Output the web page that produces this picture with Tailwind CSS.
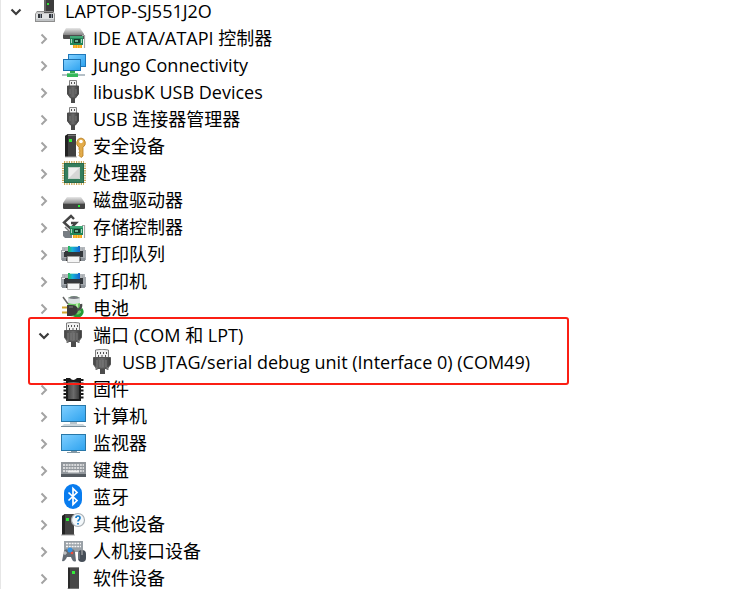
<!DOCTYPE html>
<html lang="zh-CN">
<head>
<meta charset="utf-8">
<meta name="viewport" content="width=device-width, initial-scale=1">
<title>设备管理器</title>
<script src="https://cdn.jsdelivr.net/npm/@tailwindcss/browser@4"></script>
</head>
<body class="h-screen overflow-hidden border-l border-[#e6e6e6] bg-white font-['Open_Sans','Noto_Sans_CJK_SC',sans-serif] text-lg text-black">
<svg class="absolute size-0" aria-hidden="true">
  <defs>
    <linearGradient id="screen" x1="0" y1="0" x2="1" y2="1"><stop offset="0" stop-color="#7dceff"/><stop offset="1" stop-color="#2fa3ef"/></linearGradient>
    <linearGradient id="metal" x1="0" y1="0" x2="0" y2="1"><stop offset="0" stop-color="#e8e8e8"/><stop offset="1" stop-color="#929292"/></linearGradient>
    <linearGradient id="dark" x1="0" y1="0" x2="1" y2="0"><stop offset="0" stop-color="#444"/><stop offset=".5" stop-color="#6c6c6c"/><stop offset="1" stop-color="#3c3c3c"/></linearGradient>
    <linearGradient id="ink" x1="0" y1="0" x2="1" y2="0"><stop offset="0" stop-color="#2bb84b"/><stop offset=".35" stop-color="#19b5d8"/><stop offset="1" stop-color="#1460cf"/></linearGradient>

    <symbol id="closed" viewBox="0 0 12 12"><path d="M3.500 1.500 8 6l-4.500 4.500" fill="none" stroke="#a3a3a3" stroke-width="2"/></symbol>
    <symbol id="open" viewBox="0 0 12 12"><path d="M1.500 3.500 6 8l4.500-4.500" fill="none" stroke="#3c3c3c" stroke-width="2.200"/></symbol>

    <symbol id="board" viewBox="0 0 17 14">
      <path d="M1 1h13v9H1z" fill="#23875a"/><path d="M1 1h13v2H1z" fill="#43a878"/>
      <path d="M5 4h6v4H5z" fill="#163b2c"/><path d="M6 5h3v2H6z" fill="#6fae91"/>
      <path d="M2 4h1v4H2zM12 4h1v4h-1z" fill="#a9d5bf"/>
      <path d="M4 10h9v3H4z" fill="#f4a514"/><path d="M6 10v3M8.500 10v3M11 10v3" stroke="#fad078" stroke-width=".7"/>
      <path d="M15.500 0v13M13 .5h3" stroke="#a6a6a6" stroke-width="1.200"/>
    </symbol>
    <symbol id="root" viewBox="0 0 28 27">
      <path d="M13 0h10v15H13z" fill="#3c3c3c"/><path d="M13 0h2v15h-2z" fill="#666"/><path d="M16 5h2v2h-2z" fill="#35e03c"/>
      <path d="M6 13h16l2 3v8H4v-8z" fill="#8e8e8e"/><path d="M6 14h16l1.500 2h-19z" fill="#c9c9c9"/><path d="M5 16h18v7H5z" fill="#dfe1e2"/><path d="M5 21h18v2H5z" fill="#bfc2c4"/>
      <path d="M7 16h4v4H7zM18 16h4v4h-4z" fill="#30343a"/><path d="M9 16h1v4H9zM20 16h1v4h-1z" fill="#87909b"/>
      <path d="M13 14h9v1h-9z" fill="#555"/>
    </symbol>
    <symbol id="ide" viewBox="0 0 28 27">
      <path d="M7 3h14l4 6H4z" fill="url(#metal)"/><path d="M4 9h21v5H5q-1 0-1-1z" fill="#4e4e4e"/><path d="M4 9h21v1H4z" fill="#8b8b8b"/>
      <use href="#board" x="10" y="10" width="17" height="14"/>
    </symbol>
    <symbol id="network" viewBox="0 0 28 27">
      <path d="M9 2h18v13H9z" fill="#1f78ba"/><path d="M10 3h16v11H10z" fill="url(#screen)"/>
      <path d="M4 7h18v12H4z" fill="#1a6fae"/><path d="M5 8h16v10H5z" fill="url(#screen)"/>
      <path d="M11 19h5v3h-5z" fill="#32a853"/><path d="M3 22h23v2H3z" fill="#b5c0c7"/><path d="M8 21h11v4H8z" fill="#35b85a"/><path d="M8 21h11v1H8z" fill="#78d393"/>
    </symbol>
    <symbol id="usb" viewBox="0 0 28 27">
      <path d="M10.500 1.500h7v6h-7z" fill="#f0f0f0" stroke="#828282"/><path d="M12 3h1v2h-1zM15 3h1v2h-1z" fill="#555"/>
      <path d="M8.500 7h11v8l-3 4h-5l-3-4z" fill="url(#dark)" stroke="#4a4a4a"/><path d="M12 19h4v5h-4z" fill="#4a4a4a"/><path d="M11 10v5M17 10v5" stroke="#777"/>
    </symbol>
    <symbol id="security" viewBox="0 0 28 27">
      <path d="M6 3 9 1h8v23H6z" fill="#404040"/><path d="M6 3 9 1v23H6z" fill="#222"/><path d="M9 2h8v1H9z" fill="#777"/><path d="M10 6h3v3h-3z" fill="#32ec36"/>
      <path d="M6 24h12" stroke="#aaa"/>
      <path d="M22 5a5 5 0 0 1 2 9.200V23l-2 1.500-2-2 1-1.500-1-1.500 1-1.500-1-1.500v-2.300A5 5 0 0 1 22 5z" fill="#e3ac4b" stroke="#b67c20" stroke-width=".8"/><circle cx="22" cy="8.500" r="1.800" fill="#fff"/>
    </symbol>
    <symbol id="cpu" viewBox="0 0 28 27">
      <path d="M5 2.500h20M5 23.500h20M4.500 3v20M25.500 3v20" stroke="#c6a453" stroke-width="3" stroke-dasharray="1.200 1.200"/>
      <path d="M5 3h20v20H5z" fill="#25694b"/><path d="M6 4h18v18H6z" fill="#347d5c"/><path d="M9 7h12v12H9z" fill="#eee"/><path d="M10 18 20 8v10z" fill="#d6d6d6"/><path d="M9.500 7.500h11v11h-11z" fill="none" stroke="#c5d1ca"/>
    </symbol>
    <symbol id="disk" viewBox="0 0 28 27">
      <path d="M8 10h14l4 6H4z" fill="url(#metal)"/><path d="M4 16h22v5q0 1-1 1H5q-1 0-1-1z" fill="#444"/><path d="M4 16h22v1H4z" fill="#777"/><path d="M19 18h2v2h-2z" fill="#2df13a"/>
    </symbol>
    <symbol id="storage" viewBox="0 0 28 27">
      <path d="M4 17h9v7H6l-2-2z" fill="#777d83"/>
      <path d="M15 5 12 2 5 8.500l6.500 6L17 9h-5" fill="none" stroke="#454545" stroke-width="2.400"/><path d="M6 13l5 5 3-3" fill="none" stroke="#777" stroke-width="1.500"/>
      <use href="#board" x="10" y="11" width="17" height="14"/>
    </symbol>
    <symbol id="printer" viewBox="0 0 28 27">
      <path d="M3 6h7v6H3zM19 6h7v6h-7z" fill="#b4b8bc"/><path d="M9 5h12v7H9z" fill="url(#ink)"/><path d="M11 5h8v1h-8z" fill="#b8e5df"/>
      <path d="M2 9h3V7h1v4h17V7h1v2h3v10H2z" fill="#a5aaaf"/><path d="M5 10h19v6H5z" fill="#33373b"/><path d="M9 6h12v5H9z" fill="url(#ink)"/><path d="M3 17h23v3H3z" fill="#8b9197"/>
      <path d="M8 14h13l1 6H7z" fill="#363636"/><path d="M8.500 15.500h12v6h-12z" fill="#f5f5f5" stroke="#999" stroke-width=".7"/><path d="M3 10h3v1H3z" fill="#eee"/>
    </symbol>
    <symbol id="battery" viewBox="0 0 28 27">
      <path d="M9 3q6-4 12 0v17q-6 3-12 0z" fill="#6bca62"/><path d="M9 3v5q6 2 12 0V3q-6-3-12 0z" fill="#dce2e2"/><path d="M9 3q6-4 12 0-6 2-12 0z" fill="#777b80"/><path d="M18 8v5" stroke="#bbf0ac" stroke-width="2"/>
      <path d="M15 20c6 3 10-2 7-6" fill="none" stroke="#239b35" stroke-width="3"/>
      <path d="M3 12.500h7M3 17.500h7" stroke="#d2a52f" stroke-width="2"/>
      <path d="M8 10h4q7 0 7 5t-7 6H8z" fill="#3b3b3b"/><path d="M18 15q5-1 4-6" fill="none" stroke="#4a4a4a" stroke-width="2.500"/><path d="M4 2l5 7" stroke="#666" stroke-width="1.500"/><path d="M10 12h4" stroke="#808080"/>
    </symbol>
    <symbol id="port" viewBox="0 0 28 27">
      <path d="M7.500 1q6.500-1.500 13 0v8h-13z" fill="#f1f1f1" stroke="#7d7d7d"/><path d="M9 3h1v2H9zM12 3h1v2h-1zM15 3h1v2h-1zM18 3h1v2h-1zM10 6h1v2h-1zM13.500 6h1v2h-1zM17 6h1v2h-1z" fill="#555"/>
      <path d="M5.500 8.500h17v7l-3 4h-11l-3-4z" fill="url(#dark)" stroke="#555"/><path d="M9 11v7M12 11v7M15 11v7M18 11v7" stroke="#7c7c7c"/><path d="M12 20h5v5h-5z" fill="#4c4c4c"/>
      <path d="M8.500 18v3M19.500 18v3" stroke="#777" stroke-width="2"/>
    </symbol>
    <symbol id="firmware" viewBox="0 0 28 27">
      <path d="M6.500 3v21M22.500 3v21" stroke="#171717" stroke-width="4" stroke-dasharray="2 1.500"/><path d="M7 2h4q3 4 7 0h4v23H7z" fill="#1b1b1b"/><path d="M9 6h11v17H9z" fill="url(#dark)"/>
    </symbol>
    <symbol id="computer" viewBox="0 0 28 27">
      <path d="M2 2h25v17H2z" fill="#2877a8"/><path d="M3 3h23v15H3z" fill="url(#screen)"/><path d="M11 19h7v2h-7z" fill="#b8c4cb"/><path d="M5 21h19l3 3H2z" fill="#cbd6dc"/><path d="M2 23h25v1H2z" fill="#778d9b"/>
    </symbol>
    <symbol id="monitor" viewBox="0 0 28 27">
      <path d="M2 4h25v17H2z" fill="#2877a8"/><path d="M3 5h23v15H3z" fill="url(#screen)"/><path d="M12 21h6v1h3v1H8v-1h4z" fill="#8398a5"/>
    </symbol>
    <symbol id="keyboard" viewBox="0 0 28 27">
      <path d="M2 5h25v15H2z" fill="#92979c"/><path d="M2 17h25v3H2z" fill="#555b61"/><path d="M4 8h21M4 11h21M4 14h21" stroke="#f0f0f0" stroke-width="1.700" stroke-dasharray="2 .8"/><path d="M9 14.500h11" stroke="#f0f0f0" stroke-width="2"/>
    </symbol>
    <symbol id="bluetooth" viewBox="0 0 28 27">
      <rect x="5" y="0" width="18" height="25" rx="9" fill="#087cef"/><path d="M9.500 8.500 18 16.500l-4 4V4.500l4 4-8.500 8" fill="none" stroke="#fff" stroke-width="1.700"/>
    </symbol>
    <symbol id="other" viewBox="0 0 28 27">
      <path d="M3 5 6 3h9v21H3z" fill="#434343"/><path d="M3 5 6 3v21H3z" fill="#222"/><path d="M7 7h3v3H7z" fill="#2fe538"/><path d="M2 24h14" stroke="#aaa"/>
      <circle cx="19" cy="9" r="6.500" fill="#f4f8fb" stroke="#a9b0b5" stroke-width="1.200"/><path d="M17 7q0-2 2-2t2 2q0 1-1 1.800t-1 1.700M19 12v1.500" fill="none" stroke="#167cca" stroke-width="1.700"/>
    </symbol>
    <symbol id="hid" viewBox="0 0 28 27">
      <path d="M5 3h19v11H5z" fill="#9aa1a7"/><path d="M7 5.500h15M7 8.500h15" stroke="#f5f5f5" stroke-width="1.600" stroke-dasharray="2 .8"/>
      <path d="M3 23 5 13q2-3 4-1h3q3-2 4 2l1 9q-3 2-5-4H8q-2 5-5 4z" fill="#646c75"/><path d="M6 13v4M4 15h4" stroke="#ddd"/><circle cx="11" cy="12" r="2.500" fill="#3391e2"/><circle cx="13" cy="15" r="1.300" fill="#ef4b3c"/>
      <rect x="19" y="12" width="8" height="12" rx="4" fill="#464e58"/><path d="M23 12v5" stroke="#bbb"/><path d="M20 14v7" stroke="#88919a"/>
    </symbol>
    <symbol id="software" viewBox="0 0 28 27">
      <path d="M9 3h11v21H9z" fill="#484848"/><path d="M9 3h2v21H9z" fill="#2a2a2a"/><path d="M9 2h11v1H9z" fill="#888"/><path d="M13 6h3v3h-3z" fill="#34ec39"/><path d="M8 24h12" stroke="#aaa"/>
    </symbol>
  </defs>
</svg>
<main class="-mt-[2px] leading-[27px] whitespace-nowrap">
  <ul role="tree" aria-label="设备">
    <li role="treeitem" aria-expanded="true">
      <div class="flex items-center"><button class="flex w-[30px] justify-center" aria-label="折叠 LAPTOP-SJ551J2O"><svg class="size-3"><use href="#open"/></svg></button><svg class="mr-1.5 h-[27px] w-7"><use href="#root"/></svg><span>LAPTOP-SJ551J2O</span></div>
      <ul role="group" class="pl-7">
        <li role="treeitem" class="flex items-center"><button class="flex w-[30px] justify-center" aria-label="展开"><svg class="size-3"><use href="#closed"/></svg></button><svg class="mr-1.5 h-[27px] w-7"><use href="#ide"/></svg><span>IDE ATA/ATAPI 控制器</span></li>
        <li role="treeitem" class="flex items-center"><button class="flex w-[30px] justify-center" aria-label="展开"><svg class="size-3"><use href="#closed"/></svg></button><svg class="mr-1.5 h-[27px] w-7"><use href="#network"/></svg><span>Jungo Connectivity</span></li>
        <li role="treeitem" class="flex items-center"><button class="flex w-[30px] justify-center" aria-label="展开"><svg class="size-3"><use href="#closed"/></svg></button><svg class="mr-1.5 h-[27px] w-7"><use href="#usb"/></svg><span>libusbK USB Devices</span></li>
        <li role="treeitem" class="flex items-center"><button class="flex w-[30px] justify-center" aria-label="展开"><svg class="size-3"><use href="#closed"/></svg></button><svg class="mr-1.5 h-[27px] w-7"><use href="#usb"/></svg><span>USB 连接器管理器</span></li>
        <li role="treeitem" class="flex items-center"><button class="flex w-[30px] justify-center" aria-label="展开"><svg class="size-3"><use href="#closed"/></svg></button><svg class="mr-1.5 h-[27px] w-7"><use href="#security"/></svg><span>安全设备</span></li>
        <li role="treeitem" class="flex items-center"><button class="flex w-[30px] justify-center" aria-label="展开"><svg class="size-3"><use href="#closed"/></svg></button><svg class="mr-1.5 h-[27px] w-7"><use href="#cpu"/></svg><span>处理器</span></li>
        <li role="treeitem" class="flex items-center"><button class="flex w-[30px] justify-center" aria-label="展开"><svg class="size-3"><use href="#closed"/></svg></button><svg class="mr-1.5 h-[27px] w-7"><use href="#disk"/></svg><span>磁盘驱动器</span></li>
        <li role="treeitem" class="flex items-center"><button class="flex w-[30px] justify-center" aria-label="展开"><svg class="size-3"><use href="#closed"/></svg></button><svg class="mr-1.5 h-[27px] w-7"><use href="#storage"/></svg><span>存储控制器</span></li>
        <li role="treeitem" class="flex items-center"><button class="flex w-[30px] justify-center" aria-label="展开"><svg class="size-3"><use href="#closed"/></svg></button><svg class="mr-1.5 h-[27px] w-7"><use href="#printer"/></svg><span>打印队列</span></li>
        <li role="treeitem" class="flex items-center"><button class="flex w-[30px] justify-center" aria-label="展开"><svg class="size-3"><use href="#closed"/></svg></button><svg class="mr-1.5 h-[27px] w-7"><use href="#printer"/></svg><span>打印机</span></li>
        <li role="treeitem" class="flex items-center"><button class="flex w-[30px] justify-center" aria-label="展开"><svg class="size-3"><use href="#closed"/></svg></button><svg class="mr-1.5 h-[27px] w-7"><use href="#battery"/></svg><span>电池</span></li>
        <li role="treeitem" aria-expanded="true" class="relative w-[538px]">
          <div class="flex items-center"><button class="flex w-[30px] justify-center" aria-label="折叠"><svg class="size-3"><use href="#open"/></svg></button><svg class="mr-1.5 h-[27px] w-7"><use href="#port"/></svg><span>端口 (COM 和 LPT)</span></div>
          <ul role="group" class="pl-[29px]">
            <li role="treeitem" class="flex items-center pl-[30px]"><svg class="mr-1.5 h-[27px] w-7"><use href="#port"/></svg><span>USB JTAG/serial debug unit (Interface 0) (COM49)</span></li>
          </ul>
          <div class="pointer-events-none absolute -top-[5px] -right-0.5 -bottom-[9px] -left-px rounded-[3px] border-2 border-[#fb1f14]"></div>
        </li>
        <li role="treeitem" class="flex items-center"><button class="flex w-[30px] justify-center" aria-label="展开"><svg class="size-3"><use href="#closed"/></svg></button><svg class="mr-1.5 h-[27px] w-7"><use href="#firmware"/></svg><span>固件</span></li>
        <li role="treeitem" class="flex items-center"><button class="flex w-[30px] justify-center" aria-label="展开"><svg class="size-3"><use href="#closed"/></svg></button><svg class="mr-1.5 h-[27px] w-7"><use href="#computer"/></svg><span>计算机</span></li>
        <li role="treeitem" class="flex items-center"><button class="flex w-[30px] justify-center" aria-label="展开"><svg class="size-3"><use href="#closed"/></svg></button><svg class="mr-1.5 h-[27px] w-7"><use href="#monitor"/></svg><span>监视器</span></li>
        <li role="treeitem" class="flex items-center"><button class="flex w-[30px] justify-center" aria-label="展开"><svg class="size-3"><use href="#closed"/></svg></button><svg class="mr-1.5 h-[27px] w-7"><use href="#keyboard"/></svg><span>键盘</span></li>
        <li role="treeitem" class="flex items-center"><button class="flex w-[30px] justify-center" aria-label="展开"><svg class="size-3"><use href="#closed"/></svg></button><svg class="mr-1.5 h-[27px] w-7"><use href="#bluetooth"/></svg><span>蓝牙</span></li>
        <li role="treeitem" class="flex items-center"><button class="flex w-[30px] justify-center" aria-label="展开"><svg class="size-3"><use href="#closed"/></svg></button><svg class="mr-1.5 h-[27px] w-7"><use href="#other"/></svg><span>其他设备</span></li>
        <li role="treeitem" class="flex items-center"><button class="flex w-[30px] justify-center" aria-label="展开"><svg class="size-3"><use href="#closed"/></svg></button><svg class="mr-1.5 h-[27px] w-7"><use href="#hid"/></svg><span>人机接口设备</span></li>
        <li role="treeitem" class="flex items-center"><button class="flex w-[30px] justify-center" aria-label="展开"><svg class="size-3"><use href="#closed"/></svg></button><svg class="mr-1.5 h-[27px] w-7"><use href="#software"/></svg><span>软件设备</span></li>
      </ul>
    </li>
  </ul>
</main>
</body>
</html>
